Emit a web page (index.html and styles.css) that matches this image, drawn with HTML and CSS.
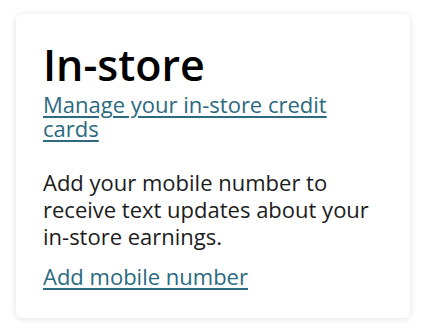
FILE: index.html
```html
<!DOCTYPE html>
<html lang="en">
<head>
<meta charset="utf-8">
<link rel="stylesheet" href="styles.css">
</head>
<body>
<section class="card">
  <h2 class="title">In-store</h2>
  <a class="link manage" href="#">Manage your in-store credit cards</a>
  <p class="text">Add your mobile number to receive text updates about your in-store earnings.</p>
  <a class="link add" href="#">Add mobile number</a>
</section>
</body>
</html>
```
FILE: styles.css
```css
html, body {
  margin: 0;
  padding: 0;
  background: #ffffff;
}
body {
  font-family: "Open Sans", "Liberation Sans", sans-serif;
  padding: 14px 13px 12px 16px;
}
.card {
  background: #ffffff;
  border-radius: 6px;
  box-shadow: 0 1px 6px rgba(0, 0, 0, 0.12);
  padding: 23px 27px 27px 27px;
  display: flex;
  flex-direction: column;
  align-items: flex-start;
  height: 304px;
  box-sizing: border-box;
}
.title {
  margin: 0;
  font-size: 43px;
  line-height: 55px;
  font-weight: 600;
  color: #000;
}
.link {
  color: #2b6a80;
  text-decoration: underline;
  text-underline-offset: 3px;
  text-decoration-thickness: 1.5px;
  font-size: 22px;
}
.manage {
  line-height: 24px;
  width: 300px;
}
.text {
  margin: 29px 0 13px;
  font-size: 22px;
  line-height: 27px;
  color: #1c1c1c;
}
.add {
  line-height: 27px;
}
```
